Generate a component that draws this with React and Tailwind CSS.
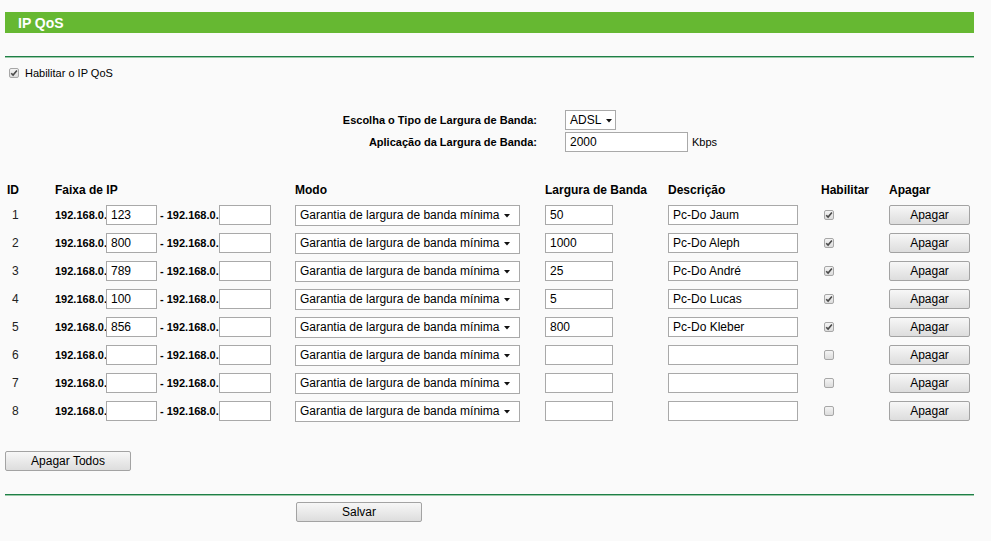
import React from "react";

const rows = [
  { id: 1, ip: "123", bw: "50", desc: "Pc-Do Jaum", on: true },
  { id: 2, ip: "800", bw: "1000", desc: "Pc-Do Aleph", on: true },
  { id: 3, ip: "789", bw: "25", desc: "Pc-Do André", on: true },
  { id: 4, ip: "100", bw: "5", desc: "Pc-Do Lucas", on: true },
  { id: 5, ip: "856", bw: "800", desc: "Pc-Do Kleber", on: true },
  { id: 6, ip: "", bw: "", desc: "", on: false },
  { id: 7, ip: "", bw: "", desc: "", on: false },
  { id: 8, ip: "", bw: "", desc: "", on: false },
];

function Check({ on }) {
  return (
    <div className="w-[10px] h-[10px] border border-[#a7a7a7] rounded-[2px] bg-gradient-to-b from-[#f4f4f4] to-[#dcdcdc] flex items-center justify-center">
      {on && (
        <svg width="8" height="8" viewBox="0 0 8 8">
          <path d="M1.2 4.2 L3.1 6.1 L6.9 1.6" fill="none" stroke="#4a4a4a" strokeWidth="1.6" />
        </svg>
      )}
    </div>
  );
}

function Arrow() {
  return (
    <svg width="6" height="5" viewBox="0 0 6 5" className="shrink-0 mt-[1px]">
      <polygon points="0,1 6,1 3,4.5" fill="#111" />
    </svg>
  );
}

function Box({ w, value }) {
  return (
    <div className={`${w} shrink-0 h-[20px] border border-[#a9a9a9] bg-white flex items-center pl-[4px] text-[12px] text-black leading-none`}>
      {value}
    </div>
  );
}

function Btn({ w, children }) {
  return (
    <div className={`${w} h-[20px] border border-[#a3a3a3] rounded-[2px] bg-gradient-to-b from-[#f7f7f7] to-[#dddddd] flex items-center justify-center text-[12px] text-black leading-none`}>
      {children}
    </div>
  );
}

export default function App() {
  return (
    <div className="min-h-screen w-[991px] bg-[#fafafa] font-['Liberation_Sans',Arial,sans-serif] text-black pt-[12px] px-[5px]">
      <div className="w-[969px]">
        <div className="h-[21px] bg-[#66b832] flex items-center pl-[13px] text-white font-bold text-[14px] leading-none">
          IP QoS
        </div>
        <div className="mt-[23px] h-px bg-[#1e7f47]" />
        <div className="h-px bg-[#9ccaa9]" />

        <div className="mt-[8px] h-[14px] flex items-center">
          <div className="ml-[4px]">
            <Check on />
          </div>
          <span className="ml-[6px] text-[11px] leading-none">Habilitar o IP QoS</span>
        </div>

        <div className="mt-[29px] h-[22px] flex items-center">
          <div className="w-[532px] text-right font-bold text-[11px] leading-none">
            Escolha o Tipo de Largura de Banda:
          </div>
          <div className="ml-[28px] w-[51px] h-[20px] border border-[#a9a9a9] bg-white flex items-center pl-[4px] gap-[5px] text-[12px] leading-none">
            ADSL
            <Arrow />
          </div>
        </div>
        <div className="h-[22px] flex items-center">
          <div className="w-[532px] text-right font-bold text-[11px] leading-none">
            Aplicação da Largura de Banda:
          </div>
          <div className="ml-[28px]">
            <Box w="w-[123px]" value="2000" />
          </div>
          <span className="ml-[4px] text-[11px] leading-none">Kbps</span>
        </div>

        <div className="mt-[27px] h-[20px] grid grid-cols-[50px_240px_250px_123px_153px_68px_85px] items-center font-bold text-[12px] leading-none">
          <div className="pl-[2px]">ID</div>
          <div>Faixa de IP</div>
          <div>Modo</div>
          <div>Largura de Banda</div>
          <div>Descrição</div>
          <div>Habilitar</div>
          <div>Apagar</div>
        </div>

        <div className="pt-px">
          {rows.map((r) => (
            <div
              key={r.id}
              className="h-[28px] grid grid-cols-[50px_240px_250px_123px_153px_68px_85px] items-center text-[12px] leading-none"
            >
              <div className="pl-[7px] text-[#222]">{r.id}</div>
              <div className="flex items-center whitespace-nowrap">
                <span className="font-bold text-[11px] w-[51px] shrink-0">192.168.0.</span>
                <Box w="w-[51px]" value={r.ip} />
                <span className="font-bold text-[11px] ml-[3px] shrink-0">- 192.168.0.</span>
                <Box w="w-[52px]" value="" />
              </div>
              <div>
                <div className="w-[225px] h-[21px] border border-[#a9a9a9] bg-white flex items-center pl-[4px] gap-[5px] text-[12px] leading-none">
                  <span>Garantia de largura de banda mínima</span>
                  <Arrow />
                </div>
              </div>
              <div>
                <Box w="w-[68px]" value={r.bw} />
              </div>
              <div>
                <Box w="w-[130px]" value={r.desc} />
              </div>
              <div className="pl-[3px]">
                <Check on={r.on} />
              </div>
              <div>
                <Btn w="w-[81px]">Apagar</Btn>
              </div>
            </div>
          ))}
        </div>

        <div className="mt-[26px]">
          <Btn w="w-[126px]">Apagar Todos</Btn>
        </div>

        <div className="mt-[23px] h-px bg-[#1e7f47]" />
        <div className="h-px bg-[#9ccaa9]" />

        <div className="mt-[6px] ml-[291px]">
          <Btn w="w-[126px]">Salvar</Btn>
        </div>
      </div>
    </div>
  );
}
